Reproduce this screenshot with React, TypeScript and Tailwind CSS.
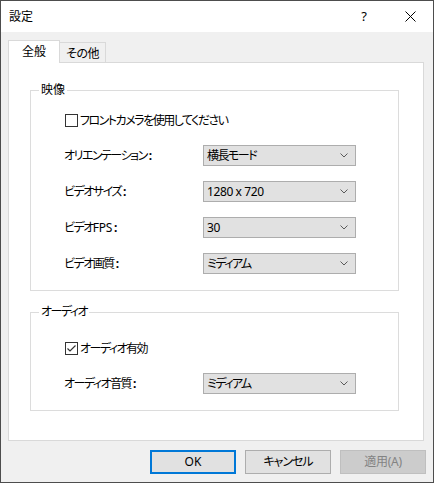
import React from "react"

const font = "font-['Noto_Sans','Noto_Sans_CJK_JP',sans-serif] [font-feature-settings:'palt']"

// narrow kana, roughly like the system UI face
const jp = "tracking-[-1.5px]"

function Chevron() {
  return (
    <svg width="8" height="5" viewBox="0 0 8 5" className="shrink-0">
      <polyline points="0.5,0.5 4,4 7.5,0.5" fill="none" stroke="#5a5a5a" strokeWidth="1" />
    </svg>
  )
}

function Select({ value, latin }: { value: string; latin?: boolean }) {
  return (
    <div className="flex h-[21px] w-[153px] items-center justify-between border border-[#adadad] bg-[#e1e1e1] pl-[3px] pr-[7px]">
      <span className={`leading-none ${latin ? "tracking-[-0.4px]" : jp}`}>{value}</span>
      <Chevron />
    </div>
  )
}

function Field({ label, value, latin }: { label: React.ReactNode; value: string; latin?: boolean }) {
  return (
    <div className="flex h-[21px] items-center pl-[25px]">
      <span className="flex w-[139px] shrink-0 items-center">
        <span className={jp}>{label}</span>
        <span className="ml-[2px] font-bold">:</span>
      </span>
      <Select value={value} latin={latin} />
    </div>
  )
}

function Checkbox({ label, checked }: { label: string; checked?: boolean }) {
  return (
    <div className="flex h-[19px] items-center pl-[26px]">
      <span className="flex h-[13px] w-[13px] items-center justify-center border border-[#333] bg-white">
        {checked && (
          <svg width="11" height="11" viewBox="0 0 11 11">
            <polyline points="1.5,5.5 4,8 9.5,2.5" fill="none" stroke="#333" strokeWidth="1.2" />
          </svg>
        )}
      </span>
      <span className={`ml-[2px] ${jp}`}>{label}</span>
    </div>
  )
}

export default function App() {
  return (
    <div className={`${font} flex h-[483px] w-[434px] flex-col border border-[#4d4d4d] text-[12px] text-black`}>
      {/* title bar */}
      <div className="flex h-[31px] shrink-0 items-center bg-white">
        <span className="pl-[8px]">設定</span>
        <div className="ml-auto flex h-full">
          <div className="flex w-[46px] items-center justify-center text-[13px]">?</div>
          <div className="flex w-[46px] items-center justify-center">
            <svg width="11" height="11" viewBox="0 0 11 11">
              <path d="M0.5 0.5 L10.5 10.5 M10.5 0.5 L0.5 10.5" stroke="#000" strokeWidth="1" />
            </svg>
          </div>
        </div>
      </div>

      {/* body */}
      <div className="flex flex-1 flex-col bg-[#f0f0f0] px-[7px] pt-[8px]">
        <div className="flex h-[22px] items-end">
          <div className="relative z-10 -mb-px flex h-[23px] w-[52px] items-center justify-center border border-b-0 border-[#d9d9d9] bg-white">
            全般
          </div>
          <div className="flex h-[20px] w-[46px] items-center justify-center border border-b-0 border-l-0 border-[#d9d9d9] pt-[2px] tracking-[-0.5px]">
            その他
          </div>
        </div>

        <div className="h-[379px] w-[416px] border border-[#d9d9d9] bg-white">
          <fieldset className="ml-[21px] mr-[24px] mt-[19px] border border-[#dcdcdc] px-[8px] pb-[16px]">
            <legend className="px-[2px] leading-[16px]">映像</legend>
            <div className="flex flex-col gap-[15px] pt-[13px]">
              <Checkbox label="フロントカメラを使用してください" />
              <Field label="オリエンテーション" value="横長モード" />
              <Field label="ビデオサイズ" value="1280 x 720" latin />
              <Field
                label={
                  <>
                    ビデオ<span className="tracking-[-0.3px]">FPS</span>
                  </>
                }
                value="30"
                latin
              />
              <Field label="ビデオ画質" value="ミディアム" />
            </div>
          </fieldset>

          <fieldset className="ml-[21px] mr-[24px] mt-[13px] border border-[#dcdcdc] px-[8px] pb-[16px]">
            <legend className={`px-[2px] leading-[16px] ${jp}`}>オーディオ</legend>
            <div className="flex flex-col gap-[15px] pt-[19px]">
              <Checkbox label="オーディオ有効" checked />
              <Field label="オーディオ音質" value="ミディアム" />
            </div>
          </fieldset>
        </div>

        {/* dialog buttons */}
        <div className="mt-[9px] flex justify-end gap-[9px]">
          <button className="h-[24px] w-[86px] border-2 border-[#0078d7] bg-[#e1e1e1]">OK</button>
          <button className="h-[24px] w-[86px] border border-[#adadad] bg-[#e1e1e1] tracking-[-1px]">キャンセル</button>
          <button className="h-[24px] w-[86px] border border-[#bfbfbf] bg-[#cccccc] text-[#838383] tracking-[-0.3px]">適用(A)</button>
        </div>
      </div>
    </div>
  )
}
